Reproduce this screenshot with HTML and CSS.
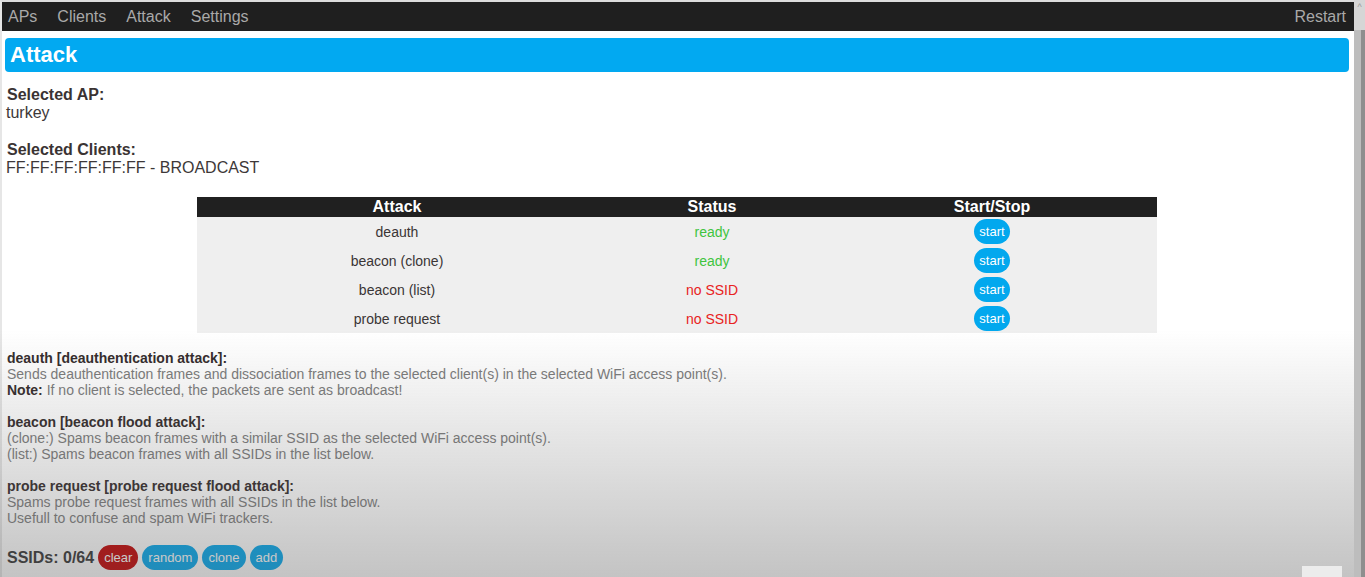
FILE: index.html
```html
<!DOCTYPE html>
<html lang="en">
<head>
<meta charset="utf-8">
<title>Attack</title>
<link rel="stylesheet" href="styles.css">
</head>
<body>
<div class="page">
  <nav class="nav">
    <div class="nav-links">
      <a class="nav-link">APs</a>
      <a class="nav-link">Clients</a>
      <a class="nav-link">Attack</a>
      <a class="nav-link">Settings</a>
    </div>
    <a class="nav-link">Restart</a>
  </nav>

  <main class="content">
    <h1 class="title">Attack</h1>

    <div class="info">
      <div class="label">Selected AP:</div>
      <div class="value">turkey</div>
    </div>

    <div class="info">
      <div class="label">Selected Clients:</div>
      <div class="value">FF:FF:FF:FF:FF:FF - BROADCAST</div>
    </div>

    <table class="attacks">
      <thead>
        <tr><th class="col-name">Attack</th><th class="col-status">Status</th><th class="col-action">Start/Stop</th></tr>
      </thead>
      <tbody>
        <tr><td>deauth</td><td class="ok">ready</td><td><button class="btn">start</button></td></tr>
        <tr><td>beacon (clone)</td><td class="ok">ready</td><td><button class="btn">start</button></td></tr>
        <tr><td>beacon (list)</td><td class="bad">no SSID</td><td><button class="btn">start</button></td></tr>
        <tr><td>probe request</td><td class="bad">no SSID</td><td><button class="btn">start</button></td></tr>
      </tbody>
    </table>

    <section class="desc">
      <p><b>deauth [deauthentication attack]:</b><br>
      Sends deauthentication frames and dissociation frames to the selected client(s) in the selected WiFi access point(s).<br>
      <b>Note:</b> If no client is selected, the packets are sent as broadcast!</p>

      <p><b>beacon [beacon flood attack]:</b><br>
      (clone:) Spams beacon frames with a similar SSID as the selected WiFi access point(s).<br>
      (list:) Spams beacon frames with all SSIDs in the list below.</p>

      <p><b>probe request [probe request flood attack]:</b><br>
      Spams probe request frames with all SSIDs in the list below.<br>
      Usefull to confuse and spam WiFi trackers.</p>
    </section>

    <div class="ssids">
      <span class="ssid-count">SSIDs: 0/64</span>
      <button class="btn btn-red">clear</button>
      <button class="btn">random</button>
      <button class="btn">clone</button>
      <button class="btn">add</button>
    </div>
  </main>
</div>
<div class="scrollbar"><span class="scroll-up">^</span></div>
<div class="shade"></div>
<div class="corner-box"></div>
</body>
</html>
```

FILE: styles.css
```css
html, body {
  margin: 0;
  height: 100%;
}

body {
  display: flex;
  overflow: hidden;
  background: #fff;
  font-family: "Liberation Sans", Arial, sans-serif;
  color: #333;
}

.page {
  flex: 1;
  min-width: 0;
  border-top: 2px solid #dcdcdc;
  border-left: 2px solid #e6e6e6;
}

/* top navigation */
.nav {
  height: 29px;
  background: #1f1f1f;
  display: flex;
  align-items: center;
  justify-content: space-between;
  padding: 0 8px 0 6px;
}

.nav-links {
  display: flex;
  gap: 20px;
}

.nav-link {
  color: #a9a9a9;
  font-size: 16px;
  text-decoration: none;
}

.content {
  padding: 7px 5px 0 3px;
}

.title {
  margin: 0 0 14px;
  height: 34px;
  line-height: 34px;
  padding: 0 5px;
  background: #02a9f1;
  color: #fff;
  border-radius: 4px;
  font-size: 22px;
  font-weight: bold;
}

.info {
  font-size: 16px;
  line-height: 18px;
  margin: 0 0 19px 1px;
}

.label {
  font-weight: bold;
  padding-left: 1px;
  color: #3a3333;
}

.value {
  color: #3d3838;
}

/* attack table */
.attacks {
  width: 960px;
  margin: 20px auto 0;
  border-collapse: collapse;
  font-size: 14px;
  text-align: center;
}

.attacks th {
  background: #202020;
  color: #fff;
  font-size: 16px;
  font-weight: bold;
  height: 20px;
  padding: 0;
  line-height: 20px;
}

.col-name { width: 400px; }
.col-status { width: 230px; }
.col-action { width: 330px; }

.attacks td {
  background: #efefef;
  height: 29px;
  padding: 0;
  color: #3a3535;
}

.attacks td.ok { color: #3fc43f; }
.attacks td.bad { color: #e82222; }

.btn {
  font-family: "Liberation Sans", Arial, sans-serif;
  font-size: 13px;
  color: #fff;
  background: #02a8ee;
  border: none;
  border-radius: 13px;
  height: 25px;
  padding: 0 6px;
  vertical-align: middle;
  cursor: pointer;
}

.attacks .btn {
  width: 36px;
  padding: 0;
}

/* attack descriptions */
.desc {
  margin: 17px 0 0 2px;
  font-size: 14px;
  line-height: 16px;
  color: #7c7c7c;
}

.desc p {
  margin: 0 0 16px;
}

.desc b {
  color: #342c2c;
}

.ssids {
  margin: 19px 0 0 2px;
  display: flex;
  align-items: center;
  gap: 4px;
}

.ssid-count {
  font-size: 16px;
  font-weight: bold;
  color: #333;
}

.btn-red {
  background: #c30000;
}

/* window scrollbar */
.scrollbar {
  width: 11px;
  flex: none;
  background: linear-gradient(to right, #bdbdbd 0 7px, #8e8e8e 7px 11px);
  position: relative;
}

.scroll-up {
  display: block;
  height: 30px;
  background: #d6d6d6;
  color: #999;
  font-size: 9px;
  text-align: center;
  line-height: 14px;
}

/* darkening band toward the bottom of the view */
.shade {
  position: fixed;
  left: 0;
  right: 11px;
  top: 0;
  bottom: 0;
  pointer-events: none;
  background: linear-gradient(to bottom, rgba(90, 90, 90, 0) 0, rgba(90, 90, 90, 0) 330px, rgba(90, 90, 90, 0.36) 577px);
}

.corner-box {
  position: fixed;
  left: 1302px;
  top: 566px;
  width: 40px;
  height: 11px;
  background: #ececec;
}
```
